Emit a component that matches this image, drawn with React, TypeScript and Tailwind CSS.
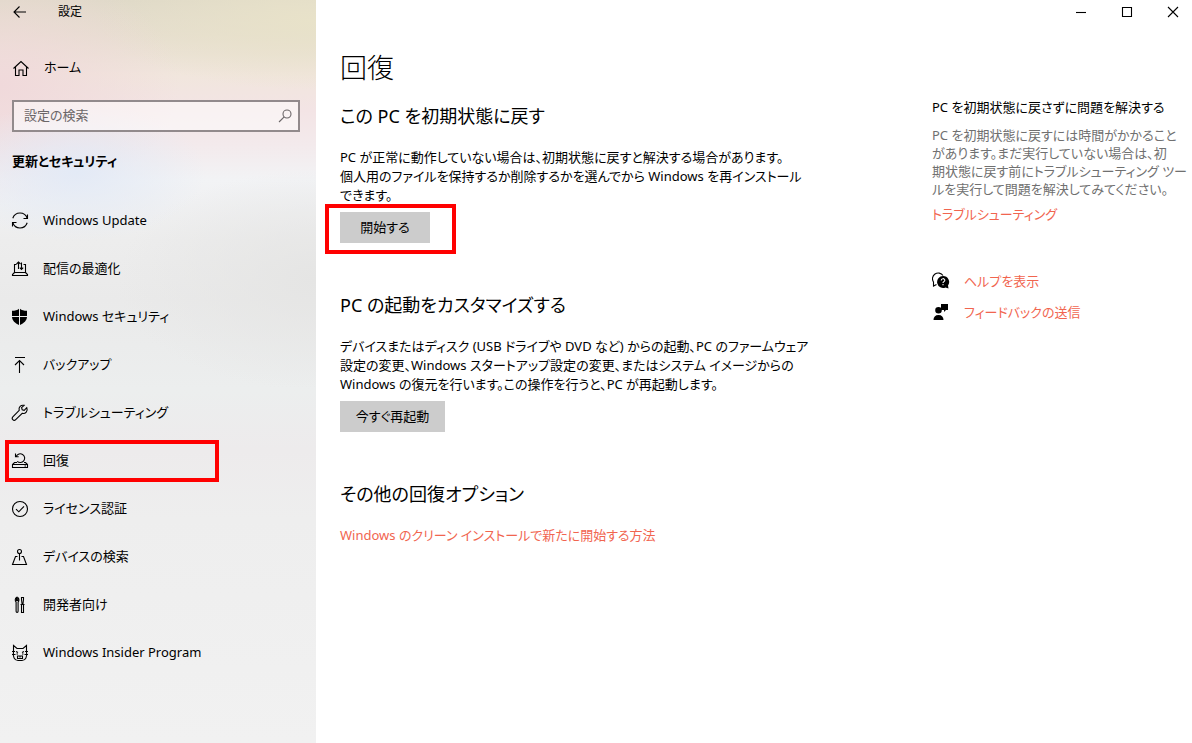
import React from 'react';

interface NavItem {
  label: string;
  icon: React.ReactNode;
  active?: boolean;
}

interface IconProps {
  children: React.ReactNode;
  size?: number;
}

const Icon: React.FC<IconProps> = ({ children, size = 18 }) => (
  <svg
    width={size}
    height={size}
    viewBox={`0 0 ${size} ${size}`}
    fill="none"
    stroke="currentColor"
    strokeWidth="1.1"
    className="shrink-0"
    aria-hidden="true"
  >
    {children}
  </svg>
);

const navItems: NavItem[] = [
  {
    label: 'Windows Update',
    icon: (
      <Icon>
        <path d="M1.8 6.2a7.6 7.6 0 0 1 14.4 0M16.2 10.8a7.6 7.6 0 0 1-14.4 0" />
        <path d="M16.5 2.5v4h-4M1.500 14.500v-4h4" />
      </Icon>
    ),
  },
  {
    label: '配信の最適化',
    icon: (
      <Icon>
        <path d="M5.5 4.5h-2v8h11v-8h-2M3.5 12.5l-2 2v1h15v-1l-2-2" />
        <path d="M7.5 9V2M5.5 4l2-2 2 2M10.5 2.500v7M8.800 7.700l1.700 1.800 1.700-1.800" />
      </Icon>
    ),
  },
  {
    label: 'Windows セキュリティ',
    icon: (
      <Icon>
        <path
          d="M1 2.8C4 2.8 6.500 2.200 8 .8V8H1zM9 .8C10.500 2.200 13 2.800 16 2.800V8H9zM1 9h7v8C4 15.200 1.200 12.500 1 9zM9 9h7c-.2 3.500-3 6.200-7 8z"
          fill="currentColor"
          stroke="none"
        />
      </Icon>
    ),
  },
  {
    label: 'バックアップ',
    icon: (
      <Icon>
        <path d="M4 1.5h10M8.5 17V4.500M4 9l4.500-4.500L13 9" />
      </Icon>
    ),
  },
  {
    label: 'トラブルシューティング',
    icon: (
      <Icon>
        <path d="M15.8 3.7l-2.6 2.6-2-.6-.6-2 2.5-2.300c-3.200-.7-5.800 1.600-4.900 5L1.800 12.800c-.9.9-.9 2 0 2.900s2 .9 2.900 0l6.500-6.400c3.300.8 6-2.200 4.600-5.600z" />
      </Icon>
    ),
  },
  {
    label: '回復',
    active: true,
    icon: (
      <Icon>
        <path d="M6 10.500H3.500l-2 2v3h15v-3l-2-2H13M1.500 12.500h15M13.500 14h1.500" />
        <path d="M5.300 4.300a4.400 4.400 0 1 1 .9 5M4.500 1.500v3.200h3.200" />
      </Icon>
    ),
  },
  {
    label: 'ライセンス認証',
    icon: (
      <Icon>
        <circle cx="9" cy="9" r="7.500" />
        <path d="M5 9.200l2.800 2.600L13 6.300" />
      </Icon>
    ),
  },
  {
    label: 'デバイスの検索',
    icon: (
      <Icon>
        <circle cx="8.500" cy="3.500" r="2" />
        <path d="M8.500 5.500v7M6.500 8.500h-2l-3 8h14l-3-8h-2" />
      </Icon>
    ),
  },
  {
    label: '開発者向け',
    icon: (
      <Icon>
        <path d="M5.500 1.500v3h1.200v-3c1.600.9 1.600 3.600.4 4.500v9.300c0 1.400-2 1.400-2 0V6c-1.200-.9-1.200-3.600.4-4.500z" />
        <path d="M10.500 1.500h2v2l-.5 4h-1l-.5-4zM9.500 8.500h4M10.500 8.500h2v8h-2z" />
      </Icon>
    ),
  },
  {
    label: 'Windows Insider Program',
    icon: (
      <Icon>
        <path d="M2.500 8V1.500L6 4.500h6l3.500-3V8c1 4.500-1 8.500-4.500 8.500H7C3.500 16.500 1.500 12.500 2.500 8z" />
        <path d="M1 7.500h3M14 7.500h3M1 10.500h3.500M13.500 10.500H17M5 7.500l2 1M13 7.500l-2 1M5.500 10h1.500M11 10h1.500M6.500 12h5v2.500h-5zM9 12v1.500" />
      </Icon>
    ),
  },
];

const linkClass = 'text-[#f1654f] hover:text-gray-500';
const buttonClass = 'h-[31px] bg-[#cccccc] text-[13px] leading-none hover:bg-[#bfbfbf]';

const Sidebar: React.FC = () => (
  <aside className="w-[316px] shrink-0 bg-[radial-gradient(130px_70px_at_24%_172px,#e3eaf6_0%,transparent_100%),radial-gradient(180px_120px_at_0%_85px,#f0d9db_0%,transparent_100%),radial-gradient(200px_110px_at_100%_280px,#e5e5e4_0%,transparent_100%),radial-gradient(220px_70px_at_100%_20px,#e8e2c9_0%,transparent_100%),linear-gradient(to_bottom,#dfd9c8_0px,#e6decf_35px,#f1e6dd_75px,#f3e4e5_110px,#f3eaec_145px,#f2f3f5_180px,#ededed_240px,#eaeaea_300px,#eceeee_390px,#edebec_450px,#eeeeee_520px,#f1f1f1_743px)]">
    <header className="flex h-6 items-center pl-3">
      <button type="button" aria-label="戻る" className="w-[46px]">
        <Icon size={16}>
          <path d="M14 8H2M7.5 2.5L2 8l5.5 5.5" />
        </Icon>
      </button>
      <span className="text-xs">設定</span>
    </header>
    <a href="#home" className="mt-8 flex h-6 items-center gap-[14px] pl-3 text-[13px]">
      <Icon>
        <path d="M1.5 9.5L9 2.5l7.5 7M3.500 8v8.500H7v-5.500h4v5.500h3.500V8" />
      </Icon>
      ホーム
    </a>
    <div className="mt-5 mr-4 ml-3 flex h-8 items-center border-2 border-[#928a8c] bg-white/50 pr-1.5 pl-2.5">
      <input
        type="search"
        aria-label="設定の検索"
        placeholder="設定の検索"
        className="min-w-0 flex-1 bg-transparent text-[13px] outline-none placeholder:text-[#6b6668]"
      />
      <span className="text-[#6b6668]">
        <Icon size={14}>
          <circle cx="9" cy="5" r="4" />
          <path d="M6.200 7.800L1 13" />
        </Icon>
      </span>
    </div>
    <h2 className="mt-[19px] pl-3 text-[13px] leading-5 font-bold">更新とセキュリティ</h2>
    <nav className="mt-[26px]">
      {navItems.map((item) => (
        <a
          key={item.label}
          href="#"
          aria-current={item.active ? 'page' : undefined}
          className="relative flex h-12 items-center gap-[14px] pl-[11px] text-[13px]"
        >
          {item.icon}
          {item.label}
          {item.active && (
            <span className="absolute inset-y-[3px] left-[5px] w-[214px] border-4 border-[#ff0000]" />
          )}
        </a>
      ))}
    </nav>
  </aside>
);

const WindowControls: React.FC = () => (
  <div className="flex h-6 items-center justify-end gap-8 pr-3">
    <button type="button" aria-label="最小化">
      <Icon size={14}>
        <path d="M2 7.5h10" />
      </Icon>
    </button>
    <button type="button" aria-label="最大化">
      <Icon size={14}>
        <path d="M2.5 2.5h9v9h-9z" />
      </Icon>
    </button>
    <button type="button" aria-label="閉じる">
      <Icon size={14}>
        <path d="M2 2l10 10M12 2L2 12" />
      </Icon>
    </button>
  </div>
);

const RelatedLinks: React.FC = () => (
  <aside className="w-[244px] shrink-0 pt-[74px] text-[13px] leading-[18px]">
    <h3 className="whitespace-nowrap">PC を初期状態に戻さずに問題を解決する</h3>
    <p className="mt-2.5 whitespace-nowrap text-[#707070]">
      PC を初期状態に戻すには時間がかかること
      <br />
      があります。まだ実行していない場合は、初
      <br />
      期状態に戻す前にトラブルシューティング ツー
      <br />
      ルを実行して問題を解決してみてください。
    </p>
    <a href="#troubleshoot" className={`mt-[7px] block ${linkClass}`}>
      トラブルシューティング
    </a>
    <a href="#help" className={`mt-[49px] flex items-center gap-[14px] ${linkClass}`}>
      <span className="text-black">
        <Icon>
          <path d="M4.500 12.500L1.500 14v-4A5.500 5.500 0 1 1 11 3.500" />
          <path
            d="M11 4a6 6 0 0 1 5 9.500l.5 3-3-1A6 6 0 1 1 11 4z"
            fill="currentColor"
            stroke="none"
          />
          <path d="M9.200 8.500c0-2.400 3.600-2.400 3.600-.2 0 1.400-1.800 1.300-1.800 2.700M11 12v1.300" stroke="white" />
        </Icon>
      </span>
      ヘルプを表示
    </a>
    <a href="#feedback" className={`mt-[13px] flex items-center gap-[14px] ${linkClass}`}>
      <span className="text-black">
        <Icon>
          <path
            d="M9 1h7v6h-2l-2 2V7H9zM6.500 4a3.300 3.300 0 1 1 0 6.600 3.300 3.300 0 0 1 0-6.600zM1.500 17c0-3 1.700-5 5-5s5 2 5 5z"
            fill="currentColor"
            stroke="none"
          />
        </Icon>
      </span>
      フィードバックの送信
    </a>
  </aside>
);

const App: React.FC = () => {
  return (
    <div className="flex min-h-screen bg-white font-['Noto_Sans','Noto_Sans_CJK_JP',sans-serif] text-black [font-feature-settings:'palt']">
      <Sidebar />
      <div className="min-w-0 flex-1">
        <WindowControls />
        <div className="flex justify-between pr-4 pl-6">
          <main className="pt-6 text-[13px] leading-[19px]">
            <h1 className="text-[27px] leading-10 font-light">回復</h1>
            <section>
              <h2 className="mt-3.5 text-lg leading-7">この PC を初期状態に戻す</h2>
              <p className="mt-[18px] whitespace-nowrap">
                PC が正常に動作していない場合は、初期状態に戻すと解決する場合があります。
                <br />
                個人用のファイルを保持するか削除するかを選んでから Windows を再インストール
                <br />
                できます。
              </p>
              <div className="relative mt-[7px] flex">
                <button type="button" className={`w-[90px] ${buttonClass}`}>
                  開始する
                </button>
                <span className="pointer-events-none absolute -top-2 -left-[15px] h-[50px] w-[131px] border-4 border-[#ff0000]" />
              </div>
            </section>
            <section className="mt-12">
              <h2 className="text-lg leading-7">PC の起動をカスタマイズする</h2>
              <p className="mt-[18px] whitespace-nowrap">
                デバイスまたはディスク (USB ドライブや DVD など) からの起動、PC のファームウェア
                <br />
                設定の変更、Windows スタートアップ設定の変更、またはシステム イメージからの
                <br />
                Windows の復元を行います。この操作を行うと、PC が再起動します。
              </p>
              <button type="button" className={`mt-[7px] w-[105px] ${buttonClass}`}>
                今すぐ再起動
              </button>
            </section>
            <section className="mt-12">
              <h2 className="text-lg leading-7">その他の回復オプション</h2>
              <a href="#clean-install" className={`mt-[18px] inline-block ${linkClass}`}>
                Windows のクリーン インストールで新たに開始する方法
              </a>
            </section>
          </main>
          <RelatedLinks />
        </div>
      </div>
    </div>
  );
};

export default App;
